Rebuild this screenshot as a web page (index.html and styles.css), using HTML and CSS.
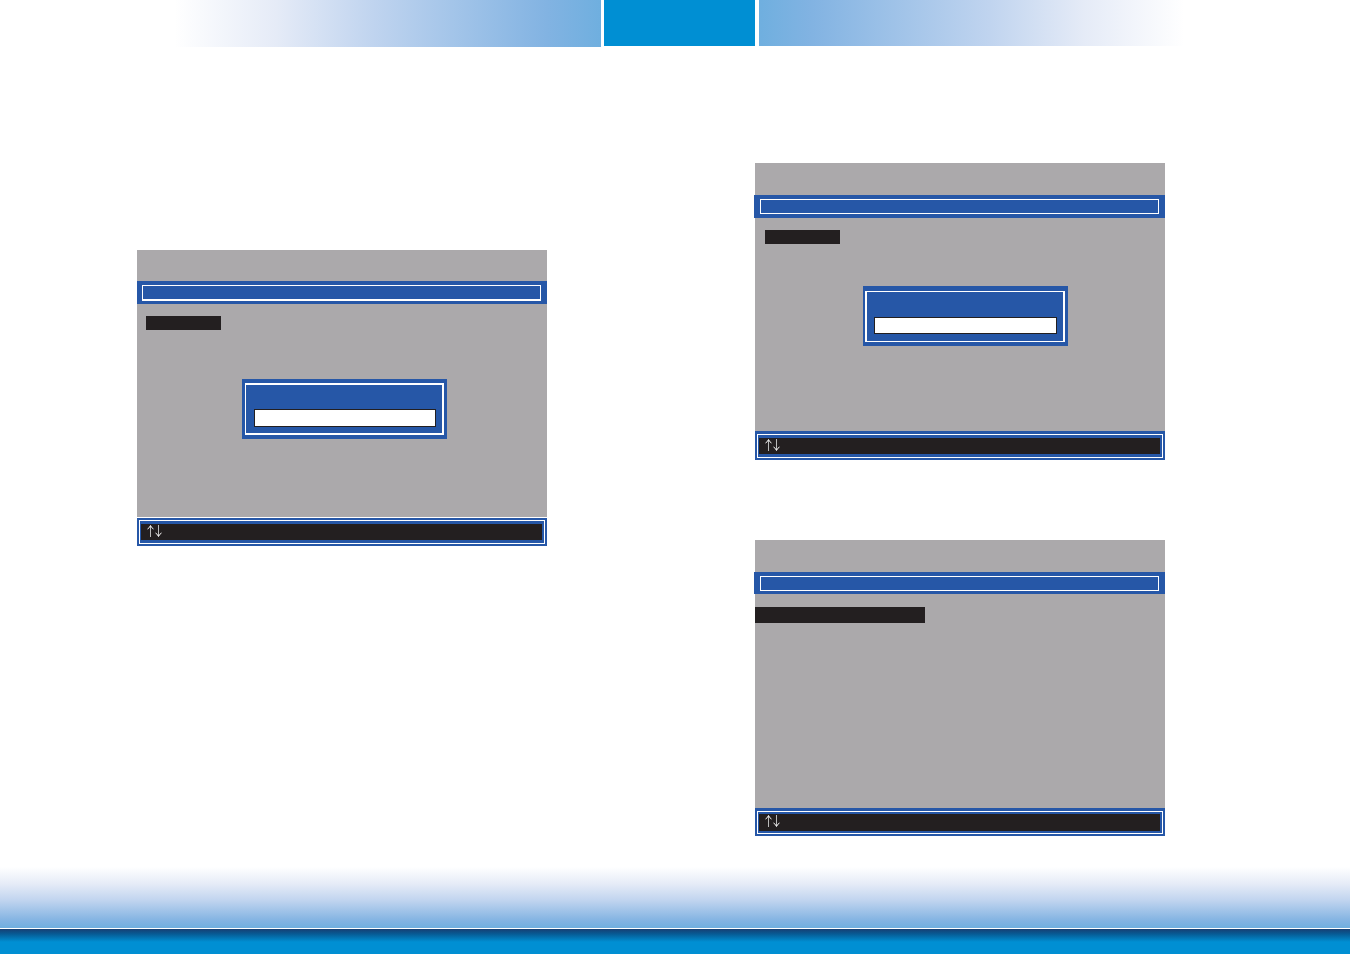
FILE: index.html
```
<!DOCTYPE html>
<html lang="en">

<head>
    <meta charset="utf-8">
    <meta name="viewport" content="width=device-width,initial-scale=1.0">
    <title>Setup</title>
    <link rel="stylesheet" href="styles.css">
</head>

<body>
<header class="header">
    <div class="header-fade header-fade-left"></div>
    <div class="header-tab"></div>
    <div class="header-fade header-fade-right"></div>
</header>

<main class="content">
    <div class="column column-left">
        <section class="screen">
            <div class="screen-title"></div>
            <div class="menu-bar"><div class="menu-frame"></div></div>
            <div class="screen-body">
                <div class="selected"></div>
                <div class="dialog">
                    <div class="dialog-frame">
                        <input class="dialog-input" type="text" aria-label="Value">
                    </div>
                </div>
            </div>
            <div class="key-bar">
                <div class="key-frame">
                    <div class="keys">
                        <svg class="arrows" viewBox="0 0 15 12" role="img" aria-label="↑↓">
                            <path d="M3.5 1V12M11.5 0V11"/>
                            <path class="arrow-head" d="M0.5 4Q2.5 3 3.5 0.5Q4.5 3 6.5 4M8.5 8Q10.5 9 11.5 11.5Q12.5 9 14.5 8"/>
                        </svg>
                    </div>
                </div>
            </div>
        </section>
    </div>

    <div class="column column-right">
        <section class="screen">
            <div class="screen-title"></div>
            <div class="menu-bar"><div class="menu-frame"></div></div>
            <div class="screen-body">
                <div class="selected"></div>
                <div class="dialog">
                    <div class="dialog-frame">
                        <input class="dialog-input" type="text" aria-label="Value">
                    </div>
                </div>
            </div>
            <div class="key-bar">
                <div class="key-frame">
                    <div class="keys">
                        <svg class="arrows" viewBox="0 0 15 12" role="img" aria-label="↑↓">
                            <path d="M3.5 1V12M11.5 0V11"/>
                            <path class="arrow-head" d="M0.5 4Q2.5 3 3.5 0.5Q4.5 3 6.5 4M8.5 8Q10.5 9 11.5 11.5Q12.5 9 14.5 8"/>
                        </svg>
                    </div>
                </div>
            </div>
        </section>

        <section class="screen screen-list">
            <div class="screen-title"></div>
            <div class="menu-bar"><div class="menu-frame"></div></div>
            <div class="screen-body">
                <div class="selected"></div>
            </div>
            <div class="key-bar">
                <div class="key-frame">
                    <div class="keys">
                        <svg class="arrows" viewBox="0 0 15 12" role="img" aria-label="↑↓">
                            <path d="M3.5 1V12M11.5 0V11"/>
                            <path class="arrow-head" d="M0.5 4Q2.5 3 3.5 0.5Q4.5 3 6.5 4M8.5 8Q10.5 9 11.5 11.5Q12.5 9 14.5 8"/>
                        </svg>
                    </div>
                </div>
            </div>
        </section>
    </div>
</main>

<footer class="footer">
    <div class="footer-fade"></div>
    <div class="footer-bar"></div>
</footer>
</body>
</html>
```

FILE: styles.css
```
* {
    margin: 0;
    padding: 0;
    box-sizing: border-box;
}

body {
    display: flex;
    flex-direction: column;
    min-height: 100vh;
    background-color: #fff;
    font-family: "Liberation Serif", serif;
}

/* top band */
.header {
    display: flex;
    align-items: flex-start;
}

.header-fade-left {
    flex: 601;
    height: 47px;
    margin-right: 3px;
    background: linear-gradient(to right, #fff 29%, #e5ebf7 46%, #c0d4ef 62%, #82b3e2 91%, #6fafdf);
}

.header-fade-right {
    flex: 591;
    height: 46px;
    margin-left: 4px;
    background: linear-gradient(to left, #fff 28%, #e5ebf7 45%, #c0d4ef 61%, #82b3e2 91%, #6fafdf);
}

.header-tab {
    width: 151px;
    height: 46px;
    background-color: #008fd3;
}

/* setup screens */
.content {
    flex: 1;
    display: grid;
    grid-template-columns: 1fr 1fr;
    gap: 208px;
    padding: 0 185px 31px 137px;
}

.column {
    display: flex;
    flex-direction: column;
    gap: 80px;
}

.column-left {
    padding-top: 203px;
}

.column-right {
    padding-top: 116px;
}

.screen {
    background-color: #aba9ab;
}

.screen-title {
    height: 32px;
}

.menu-bar {
    padding: 4px 6px;
    background-color: #2657a7;
}

.menu-frame {
    height: 15px;
    border: 1px solid #fff;
}

.column-left .screen-title {
    height: 31px;
}

.column-left .menu-bar {
    padding: 4px 6px 3px 5px;
}

.column-left .menu-frame {
    height: 16px;
    border-bottom-width: 2px;
}

.column-right .menu-bar {
    margin-left: -1px;
}

.screen-body {
    height: 213px;
    padding-top: 12px;
}

.selected {
    width: 75px;
    height: 14px;
    margin-left: 10px;
    background-color: #231f20;
}

.column-left .selected {
    margin-left: 9px;
}

.dialog {
    width: 205px;
    height: 60px;
    margin: 42px auto 0 108px;
    padding: 5px 3px 4px 2px;
    background-color: #2657a7;
}

.dialog-frame {
    height: 51px;
    padding: 25px 6px 0 7px;
    border: solid #fff;
    border-width: 1px 2px;
}

.dialog-input {
    display: block;
    width: 100%;
    height: 17px;
    padding: 0 4px;
    border: 1px solid #231f20;
    border-radius: 0;
    outline: none;
    background-color: #fff;
    font-family: inherit;
    font-size: 12px;
}

.column-left .dialog {
    margin: 49px auto 0 105px;
    padding: 4px 3px;
}

.column-left .dialog-frame {
    height: 52px;
    padding: 24px 6px 0 8px;
    border-width: 2px 2px 2px 1px;
}

.column-left .dialog-input {
    height: 18px;
}

.key-bar {
    padding: 3px 2px 2px;
    background-color: #2657a7;
}

.key-frame {
    padding: 3px 2px 3px 1px;
    border: 1px solid #fff;
}

.column-left .key-bar {
    padding: 2px;
    border-top: 1px solid #fff;
}

.keys {
    height: 16px;
    padding: 1px 0 0 6px;
    background-color: #231f20;
}

.arrows {
    display: block;
    width: 15px;
    height: 12px;
    fill: none;
    stroke: #bbb;
}

.arrow-head {
    stroke: #fff;
}

/* screen with the wide entry and no dialog */
.screen-list .menu-bar {
    padding-bottom: 3px;
}

.screen-list .screen-body {
    height: 214px;
    padding-top: 13px;
}

.screen-list .selected {
    width: 170px;
    height: 16px;
    margin-left: 0;
}

.screen-list .key-frame {
    padding-top: 2px;
    padding-bottom: 2px;
}

.screen-list .keys {
    height: 17px;
}

/* bottom band */
.footer-fade {
    height: 61px;
    background: linear-gradient(to bottom, #fff, #e5ebf7 28%, #c0d4ef 55%, #82b3e2 88%, #6fafdf);
}

.footer-bar {
    height: 26px;
    border-top: 1px solid #fff;
    background: linear-gradient(to bottom, #173f73, #075b95 5px, #008fd3 13px);
}
```
